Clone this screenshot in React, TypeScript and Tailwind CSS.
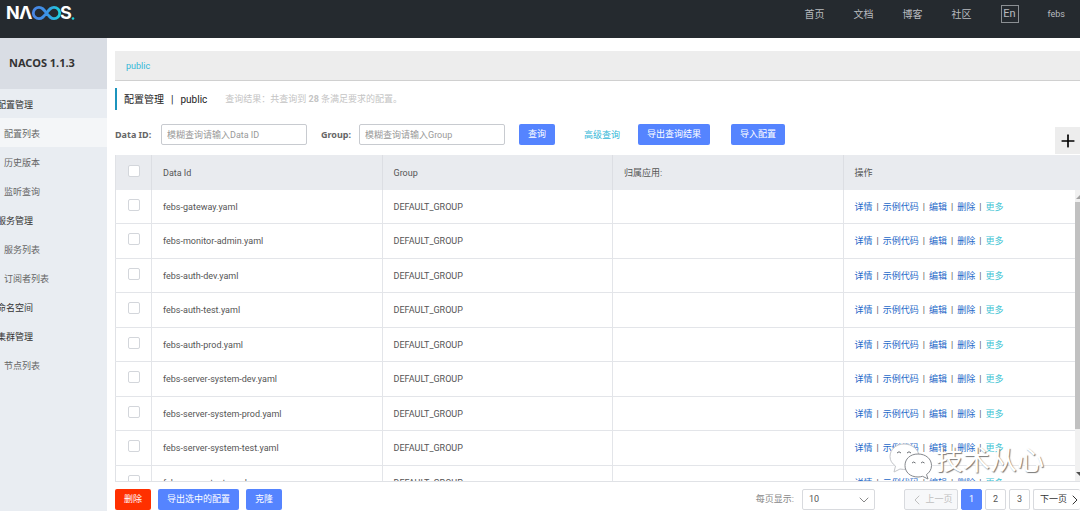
import { Fragment } from "react";
import { ChevronDown, ChevronLeft, ChevronRight, Plus } from "lucide-react";

interface MenuItem {
  label: string;
  child?: boolean;
  active?: boolean;
}

const menu: MenuItem[] = [
  { label: "配置管理" },
  { label: "配置列表", child: true, active: true },
  { label: "历史版本", child: true },
  { label: "监听查询", child: true },
  { label: "服务管理" },
  { label: "服务列表", child: true },
  { label: "订阅者列表", child: true },
  { label: "命名空间" },
  { label: "集群管理" },
  { label: "节点列表", child: true },
];

const configs = [
  "febs-gateway.yaml",
  "febs-monitor-admin.yaml",
  "febs-auth-dev.yaml",
  "febs-auth-test.yaml",
  "febs-auth-prod.yaml",
  "febs-server-system-dev.yaml",
  "febs-server-system-prod.yaml",
  "febs-server-system-test.yaml",
  "febs-server-test.yaml",
];

const actions = ["详情", "示例代码", "编辑", "删除"];

const primaryButton =
  "h-[21px] shrink-0 rounded-xs bg-[#5584ff] px-[9px] pt-px text-white whitespace-nowrap";

function Logo() {
  return (
    <svg
      width="70"
      height="18"
      viewBox="0 0 70 18"
      role="img"
      aria-label="NACOS"
      className="overflow-visible"
    >
      <defs>
        <linearGradient id="loop" x1="0" x2="1" y1="0" y2="0">
          <stop offset="0" stopColor="#4a86e4" />
          <stop offset="0.5" stopColor="#3c92e6" />
          <stop offset="1" stopColor="#1fd0dc" />
        </linearGradient>
      </defs>
      <g className="font-[Inter,sans-serif] text-[18px] font-bold" fill="#fff">
        <text x="0" y="15">N</text>
        <text x="13" y="15">Λ</text>
        <text x="54" y="15">S</text>
      </g>
      <path
        d="M40.500 9C37.500 5 36 3.300 33 3.300a5.700 5.700 0 0 0 0 11.400C36 14.700 37.500 13 40.500 9S45 3.300 48 3.300a5.700 5.700 0 0 1 0 11.400C45 14.700 43.500 13 40.500 9z"
        fill="none"
        stroke="url(#loop)"
        strokeWidth="2.800"
      />
      <circle cx="67" cy="14.500" r="1.300" fill="#1fd0dc" />
    </svg>
  );
}

function ConfigColumns() {
  return (
    <colgroup>
      <col className="w-9" />
      <col className="w-[24%]" />
      <col className="w-[24%]" />
      <col className="w-[24%]" />
      <col />
    </colgroup>
  );
}

function RowCheckbox({ label }: { label: string }) {
  return (
    <input
      type="checkbox"
      aria-label={label}
      className="mx-auto mb-[5px] block size-3 appearance-none rounded-xs border border-[#d3d6db] bg-white"
    />
  );
}

function Watermark() {
  return (
    <div className="pointer-events-none absolute right-9 bottom-0 flex items-center gap-1">
      <svg width="44" height="40" viewBox="0 0 44 40" aria-hidden="true">
        <g fill="#fff" strokeWidth="1">
          <path
            stroke="#c4c6ca"
            d="M16 3C8 3 2 8.500 2 15.500c0 4 2 7 5.500 9.500L6 31l6-3c9 2 19-3 19-12.500C31 8.500 24 3 16 3z"
          />
          <path
            stroke="#85888d"
            d="M30 13c-8 0-13 5-13 11.500S22 36 30 36c1.500 0 3-.2 4.500-.7L40 38l-1.500-4.500c3-2 5-5 5-9C43.500 18 38 13 30 13z"
          />
        </g>
        <g fill="none" stroke="#6b6f74" strokeWidth="1">
          <path d="M9 12q2-2.500 4 0M19 12q2-2.500 4 0M24 22q1.500-2 3.500 0M33 22q1.500-2 3.500 0" />
        </g>
      </svg>
      <span className="text-[27px] leading-9 text-white [text-shadow:1px_1px_1px_#777]">
        技术从心
      </span>
    </div>
  );
}

export default function App() {
  return (
    <div className="flex h-screen flex-col overflow-hidden bg-white font-['Roboto','Noto_Sans_CJK_SC',sans-serif] text-[9px] text-[#555]">
      <header className="flex h-[38px] shrink-0 items-start justify-between bg-[#252a2f] pr-[15px] pl-[6px]">
        <a href="#" className="mt-1">
          <Logo />
        </a>
        <nav className="mt-1 flex h-5 items-center gap-[29px] text-[10px] text-[#b8bbbf]">
          <a href="#">首页</a>
          <a href="#">文档</a>
          <a href="#">博客</a>
          <a href="#">社区</a>
          <button className="size-[18px] border border-[#8b8f93] text-[11px] leading-4">En</button>
          <a href="#" className="pt-px text-[9px]">febs</a>
        </nav>
      </header>

      <div className="flex min-h-0 flex-1">
        <aside className="w-[107px] shrink-0 overflow-hidden bg-[#e9edf2]">
          <h1 className="flex h-[51px] items-center bg-[#d9dde4] pl-[9px] font-['Noto_Sans',sans-serif] text-[11px] font-bold text-[#333]">
            NACOS 1.1.3
          </h1>
          <ul>
            {menu.map((item) => (
              <li key={item.label} className={item.active ? "bg-[#f4f6f8]" : ""}>
                <a
                  href="#"
                  className={`flex h-[29px] items-center pt-1 ${
                    item.child ? "pl-1 text-[#666]" : "-ml-[3px] text-[#333]"
                  }`}
                >
                  {item.label}
                </a>
              </li>
            ))}
          </ul>
        </aside>

        <main className="flex min-w-0 flex-1 flex-col pt-[13px] pl-2">
          <div className="flex h-[30px] shrink-0 items-center border-b border-[#d0d0d0] bg-[#ededed] pt-[2px] pl-[11px]">
            <a href="#" className="text-[#33b8d8]">public</a>
          </div>

          <div className="mt-[7px] flex h-[22px] shrink-0 items-center border-l-2 border-[#1c94bd] pl-[7px]">
            <h2 className="flex gap-[7px] text-[10px] text-[#222]">
              <span>配置管理</span>
              <span>|</span>
              <span>public</span>
            </h2>
            <p className="ml-[18px] pt-[2px] text-[#c4c4c4]">
              查询结果：共查询到 <b>28</b> 条满足要求的配置。
            </p>
          </div>

          {/* Search form */}
          <form className="mt-[14px] flex h-[31px] shrink-0 items-start">
            <label
              htmlFor="dataId"
              className="w-[46px] font-['Noto_Sans',sans-serif] leading-[21px] font-bold text-[#666]"
            >
              Data ID:
            </label>
            <input
              id="dataId"
              placeholder="模糊查询请输入Data ID"
              className="h-[21px] w-[146px] rounded-xs border border-[#c8cbd0] px-[5px] placeholder:text-[#999]"
            />
            <label
              htmlFor="group"
              className="ml-[14px] w-[38px] font-['Noto_Sans',sans-serif] leading-[21px] font-bold text-[#666]"
            >
              Group:
            </label>
            <input
              id="group"
              placeholder="模糊查询请输入Group"
              className="h-[21px] w-[146px] rounded-xs border border-[#c8cbd0] px-[5px] placeholder:text-[#999]"
            />
            <button type="button" className={`ml-[14px] ${primaryButton}`}>查询</button>
            <a href="#" className="mr-[18px] ml-[29px] pt-px leading-[21px] text-[#33b8d8]">高级查询</a>
            <button type="button" className={primaryButton}>导出查询结果</button>
            <button type="button" className={`ml-[21px] ${primaryButton}`}>导入配置</button>
            <button
              type="button"
              aria-label="新建配置"
              className="mt-[3px] ml-auto flex h-[27px] w-[25px] items-center justify-center bg-[#ededed] text-black"
            >
              <Plus className="size-5" strokeWidth={2} />
            </button>
          </form>

          <div className="shrink-0 bg-[#e9ebef] pr-1">
            <table className="h-[35px] w-full table-fixed border-l border-[#e0e2e6] text-left">
              <ConfigColumns />
              <thead>
                <tr className="*:border-r *:border-[#dcdee3] *:p-0 *:pt-[2px] *:font-normal *:last:border-r-0">
                  <th>
                    <RowCheckbox label="全选" />
                  </th>
                  <th><span className="pl-[11px]">Data Id</span></th>
                  <th><span className="pl-[11px]">Group</span></th>
                  <th><span className="pl-[11px]">归属应用:</span></th>
                  <th><span className="pl-[11px]">操作</span></th>
                </tr>
              </thead>
            </table>
          </div>
          <div className="relative min-h-0 flex-1 overflow-hidden border-b border-[#e0e2e6] pr-1">
            <table className="h-[310px] w-full table-fixed border-l border-[#e0e2e6]">
              <ConfigColumns />
              <tbody>
                {configs.map((name) => (
                  <tr
                    key={name}
                    className="border-b border-[#e3e5e9] *:border-r *:border-[#e3e5e9] *:p-0 *:pt-[2px] *:last:border-r-0"
                  >
                    <td>
                      <RowCheckbox label={name} />
                    </td>
                    <td><span className="pl-[11px]">{name}</span></td>
                    <td><span className="pl-[11px]">DEFAULT_GROUP</span></td>
                    <td></td>
                    <td>
                      <div className="flex gap-1 pl-[11px] whitespace-nowrap">
                        {actions.map((action) => (
                          <Fragment key={action}>
                            <a href="#" className="text-[#2468c8]">{action}</a>
                            <span>|</span>
                          </Fragment>
                        ))}
                        <a href="#" className="text-[#42c4d4]">更多</a>
                      </div>
                    </td>
                  </tr>
                ))}
              </tbody>
            </table>
            <div className="absolute top-0 right-0 flex h-full w-[5px] flex-col bg-[#f1f1f1]">
              <svg className="h-3 w-[5px]" viewBox="0 0 5 12" aria-hidden="true">
                <path d="M1 9l4-4v4z" fill="#a3a3a3" />
              </svg>
              <div className="h-[227px] bg-[#c1c1c1]" />
              <svg className="mt-auto h-3 w-[5px]" viewBox="0 0 5 12" aria-hidden="true">
                <path d="M1 3h4v4z" fill="#505050" />
              </svg>
            </div>
            <Watermark />
          </div>

          <footer className="flex h-[29px] shrink-0 items-start pt-[7px]">
            <button className="h-[21px] rounded-xs bg-[#ff3000] px-[9px] pt-px text-white">删除</button>
            <button className={`ml-[7px] ${primaryButton}`}>导出选中的配置</button>
            <button className={`ml-[7px] ${primaryButton}`}>克隆</button>

            <label htmlFor="pageSize" className="ml-auto leading-[21px] text-[#888]">
              每页显示:
            </label>
            <div className="relative ml-2">
              <select
                id="pageSize"
                className="block h-[21px] w-[73px] appearance-none rounded-xs border border-[#d8dade] pl-[6px]"
              >
                <option>10</option>
                <option>20</option>
                <option>50</option>
              </select>
              <ChevronDown
                className="pointer-events-none absolute top-[3px] right-[3px] size-4 text-[#888]"
                strokeWidth={1.500}
              />
            </div>

            <div className="ml-[29px] flex gap-[3px] *:h-[21px] *:rounded-xs *:border *:border-[#d8dade]">
              <button disabled className="flex w-[54px] items-center justify-center bg-[#f7f8fa] text-[#c0c0c0]">
                <ChevronLeft className="size-4" strokeWidth={1.500} />
                上一页
              </button>
              <button className="w-[21px] border-[#5584ff]! bg-[#5584ff] text-white">1</button>
              <button className="w-[21px]">2</button>
              <button className="w-[21px]">3</button>
              <button className="flex w-[47px] items-center border-r-0! pl-[6px] whitespace-nowrap text-[#333]">
                下一页
                <ChevronRight className="size-4 shrink-0" strokeWidth={1.500} />
              </button>
            </div>
          </footer>
        </main>
      </div>
    </div>
  );
}
